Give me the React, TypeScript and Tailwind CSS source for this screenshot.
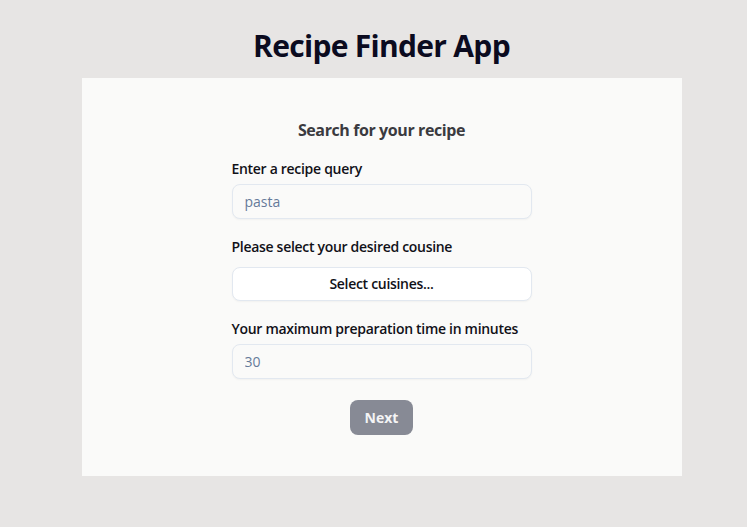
import React, { useState } from 'react';

const App: React.FC = () => {
  const [query, setQuery] = useState('');
  const [time, setTime] = useState('');

  return (
    <div
      className="min-h-screen bg-[#e7e5e4] pt-7 pl-4 flex flex-col items-center"
      style={{ fontFamily: '"Open Sans", "Noto Sans", sans-serif' }}
    >
      <h1 className="text-[30px] leading-9 font-bold tracking-[-0.7px] text-[#0b0b1f] mb-[14px]">Recipe Finder App</h1>

      <div className="w-[600px] bg-[#fafaf9] pt-10 pb-[41px] flex flex-col items-center">
        <div className="w-[300px] flex flex-col">
          <h2 className="text-center text-base leading-6 font-bold tracking-[-0.4px] text-[#3a3a40] mb-[17px]">
            Search for your recipe
          </h2>

          {/* query */}
          <label className="text-sm leading-5 font-semibold tracking-[-0.3px] text-[#111118] mb-[5px]">
            Enter a recipe query
          </label>
          <input
            value={query}
            onChange={(e) => setQuery(e.target.value)}
            placeholder="pasta"
            className="h-[35px] rounded-lg border border-[#e2e8f0] bg-[#fafaf9] px-3 text-sm text-[#334155] placeholder:text-[#667a9a] shadow-[0_1px_2px_rgba(0,0,0,0.04)] outline-none"
          />

          {/* cuisines */}
          <label className="mt-[18px] text-sm leading-5 font-semibold tracking-[-0.3px] text-[#111118] mb-[10px]">
            Please select your desired cousine
          </label>
          <button className="h-[34px] rounded-lg border border-[#e2e8f0] bg-white text-sm font-semibold tracking-[-0.3px] text-[#111118] shadow-[0_1px_2px_rgba(0,0,0,0.04)]">
            Select cuisines...
          </button>

          {/* prep time */}
          <label className="mt-[18px] text-sm leading-5 font-semibold tracking-[-0.3px] text-[#111118] mb-[5px]">
            Your maximum preparation time in minutes
          </label>
          <input
            value={time}
            onChange={(e) => setTime(e.target.value)}
            placeholder="30"
            className="h-[35px] rounded-lg border border-[#e2e8f0] bg-[#fafaf9] px-3 text-sm text-[#334155] placeholder:text-[#667a9a] shadow-[0_1px_2px_rgba(0,0,0,0.04)] outline-none"
          />

          <div className="mt-[21px] flex justify-center">
            <button className="h-[35px] w-[63px] rounded-lg bg-[#878a95] text-sm font-bold text-[#f4f4f5]">
              Next
            </button>
          </div>
        </div>
      </div>
    </div>
  );
};

export default App;
